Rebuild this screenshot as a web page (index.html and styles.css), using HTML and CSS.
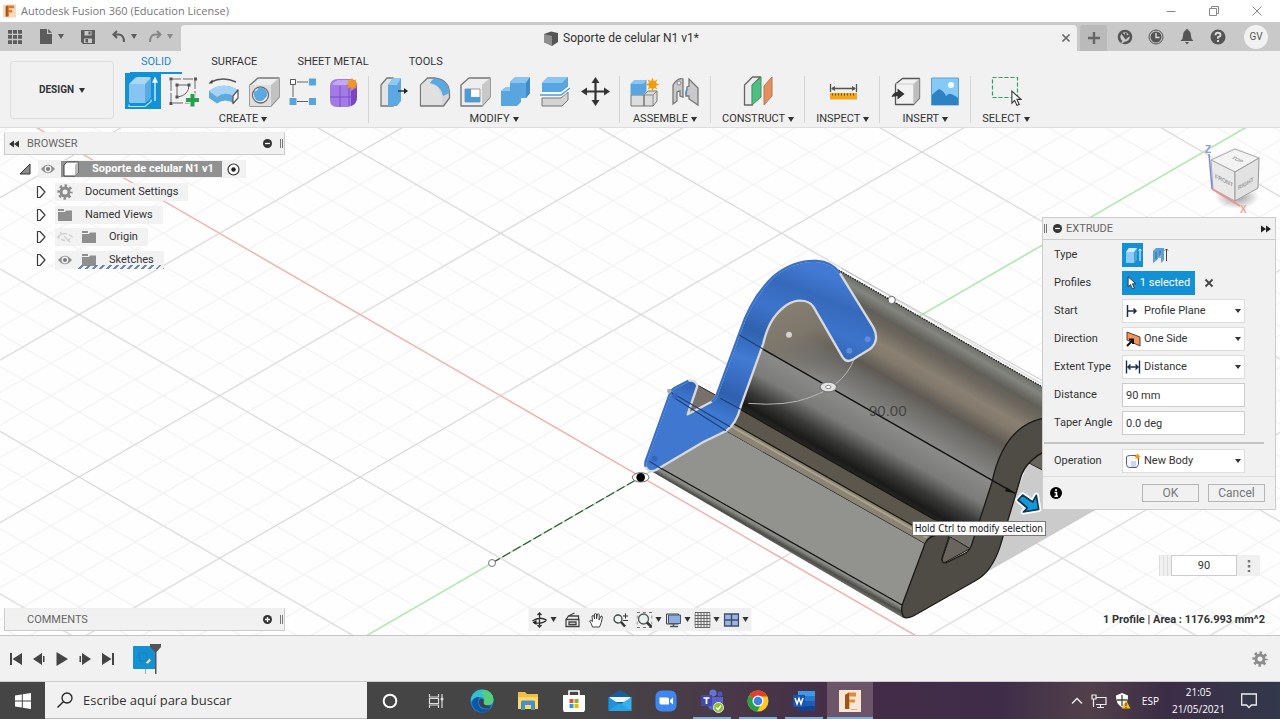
FILE: index.html
```html
<!DOCTYPE html>
<html lang="en">
<head>
<meta charset="utf-8">
<title>Autodesk Fusion 360 (Education License)</title>
<link rel="stylesheet" href="styles.css">
</head>
<body>
<svg class="defs" aria-hidden="true">
  <symbol id="burst" viewBox="-7 -7 14 14"><path d="M0-6.500L1.300-3 4.600-4.600 3-1.300 6.500 0 3 1.300 4.600 4.600 1.300 3 0 6.500-1.300 3-4.600 4.600-3 1.300-6.500 0-3-1.300-4.600-4.600-1.300-3z" fill="#f39a0c"/></symbol>
  <symbol id="eye" viewBox="0 0 16 12"><path d="M1 6Q8-2.500 15 6 8 14.500 1 6z" fill="#8e8e8e"/><circle cx="8" cy="6" r="3.400" fill="#f1f1f1"/><circle cx="8" cy="6" r="2" fill="#7c7c7c"/></symbol>
  <symbol id="folder" viewBox="0 0 16 14"><path d="M1 1h6v2H1zM1 4h7l1-1.500h6V13H1z" fill="#8f8f8f"/></symbol>
  <symbol id="gear" viewBox="0 0 16 16"><circle cx="8" cy="8" r="4" fill="none" stroke="#8c8c8c" stroke-width="3"/><circle cx="8" cy="8" r="6.400" fill="none" stroke="#8c8c8c" stroke-width="2.600" stroke-dasharray="2.500 2.530" stroke-dashoffset="1.250"/></symbol>
  <symbol id="twist" viewBox="0 0 12 14"><path d="M2.500 1.500v11H5L10 7 5 1.500z" fill="#fff" stroke="#3b3b3b" stroke-width="1.200" stroke-linejoin="round"/></symbol>
  <symbol id="cursor" viewBox="0 0 12 18"><path d="M1 1v13l3-3 2.500 5.500 2.500-1L6.500 10H11z" fill="#fff" stroke="#333" stroke-width="1.200"/></symbol>
</svg>

<header class="titlebar">
  <svg class="app-logo" viewBox="0 0 14 14"><path d="M0 0h14v14H0z" fill="#f8d9bd"/><path d="M3 2l2-1h7v3H6.500v2H10v2.500H6.500V13H3z" fill="#dd7a2c"/><path d="M3 2l2-1v12H3z" fill="#9c4f1c"/></svg>
  <span class="title-text">Autodesk Fusion 360 (Education License)</span>
  <div class="window-controls">
    <button aria-label="Minimize"><svg viewBox="0 0 12 12"><path d="M1.500 6.500h9" stroke="#888" fill="none"/></svg></button>
    <button aria-label="Restore"><svg viewBox="0 0 12 12"><path d="M1.500 3.500h7v7h-7zM3.500 3.500v-2h7v7h-2" stroke="#888" fill="none"/></svg></button>
    <button aria-label="Close"><svg viewBox="0 0 12 12"><path d="M1.500 1.500l9 9M10.500 1.500l-9 9" stroke="#888" fill="none"/></svg></button>
  </div>
</header>

<div class="tabbar">
  <div class="quick">
    <button aria-label="Data panel"><svg width="14" height="14" viewBox="0 0 14 14"><path d="M2 0v14M7 0v14M12 0v14" stroke="#5c5c5c" stroke-width="4" stroke-dasharray="3.700 1.400"/></svg></button>
    <button class="with-caret" aria-label="File"><svg width="14" height="15" viewBox="0 0 14 15"><path d="M1 0h7v5h5v10H1zM9.200 0L13 3.800H9.200z" fill="#5c5c5c"/></svg><i class="caret"></i></button>
    <button aria-label="Save"><svg width="14" height="14" viewBox="0 0 14 14"><path d="M0 0h14v14H2l-2-2z" fill="#5c5c5c"/><path d="M3.500 1h7v4.500h-7zM3 8.500h8V13H3z" fill="#c9c9c9"/><path d="M7.500 1.500h2v3h-2zM4.500 9h2.500v3.500H4.500z" fill="#5c5c5c"/></svg></button>
    <button class="with-caret" aria-label="Undo"><svg width="14" height="13" viewBox="0 0 14 13"><path d="M5 1L1.500 4.500 5 8M2 4.500h5q5 .5 5 7.500" fill="none" stroke="#5c5c5c" stroke-width="2"/></svg><i class="caret"></i></button>
    <button class="with-caret faded" aria-label="Redo"><svg width="14" height="13" viewBox="0 0 14 13"><path d="M9 1l3.500 3.500L9 8M12 4.500H7q-5 .5-5 7.500" fill="none" stroke="#5c5c5c" stroke-width="2"/></svg><i class="caret"></i></button>
  </div>
  <div class="doc-tab">
    <span class="doc-name"><svg width="16" height="15" viewBox="0 0 16 15"><path d="M1 3l7-2.500L15 2v9l-6 4-8-4z" fill="#555"/><path d="M1 3l8 2v9.500l-8-3z" fill="#8f8f8f"/></svg>Soporte de celular N1 v1*</span>
    <button class="doc-close" aria-label="Close tab"><svg width="10" height="10" viewBox="0 0 10 10"><path d="M1.500 1.500l7 7M8.500 1.500l-7 7" stroke="#666" stroke-width="1.600"/></svg></button>
  </div>
  <button class="new-tab" aria-label="New design"><svg width="12" height="12" viewBox="0 0 12 12"><path d="M6 0v12M0 6h12" stroke="#666" stroke-width="2.400"/></svg></button>
  <div class="account">
    <button aria-label="Extensions"><svg viewBox="0 0 16 16"><circle cx="8" cy="8" r="6" fill="none" stroke="#555" stroke-width="2.600"/><path d="M8 10l3-3M4 3l4 5 1-4M11 3l2 3-4 2" stroke="#555" stroke-width="2" fill="none"/><path d="M5 14l3-4" stroke="#c9c9c9" stroke-width="2"/></svg></button>
    <button aria-label="Job status"><svg viewBox="0 0 16 16"><circle cx="8" cy="8" r="7" fill="none" stroke="#555"/><circle cx="8" cy="8" r="5.500" fill="#555"/><path d="M8 4v4.500h3.500" stroke="#ddd" stroke-width="1.400" fill="none"/></svg></button>
    <button aria-label="Notifications"><svg viewBox="0 0 16 16"><path d="M8 0q1.500 0 1.500 1.500Q12 2.500 12 7q0 3 2.500 5h-13Q4 10 4 7q0-4.500 2.500-5.500Q6.500 0 8 0zM6 13h4l-2 2.500z" fill="#555"/></svg></button>
    <button aria-label="Help"><svg viewBox="0 0 16 16"><circle cx="8" cy="8" r="7.500" fill="#555"/><path d="M5.500 6.200Q5.500 3.800 8 3.800t2.500 2.200Q10.500 7.500 8 8.200v1.600M8 11v2" stroke="#ddd" stroke-width="1.900" fill="none"/></svg></button>
    <button class="avatar">GV</button>
  </div>
</div>

<div class="ribbon">
  <button class="workspace">DESIGN <i class="caret"></i></button>
  <div class="ribbon-body">
    <nav class="ribbon-tabs">
      <button class="rtab active">SOLID</button>
      <button class="rtab">SURFACE</button>
      <button class="rtab">SHEET METAL</button>
      <button class="rtab">TOOLS</button>
    </nav>
    <div class="groups">
      <section class="group">
        <div class="tools">
          <button class="tool on" aria-label="Extrude"><svg viewBox="0 0 36 36"><path d="M4 31.500v2h16l6-5v-2" fill="none" stroke="#bfe2f7" stroke-width="1.200"/><path d="M4 12q0-2 2-3l4-4q1-1 3-1h11q2 0 2 2v18l-6 6H6q-2 0-2-2z" fill="#a9d7f8"/><path d="M20 11l6-6v19l-6 6z" fill="#5ba8e2"/><path d="M4 11h14q2 0 2 2v17H6q-2 0-2-2z" fill="#86c4f2"/><path d="M30 28V6M28 9l2-4 2 4z" stroke="#e9f6ff" stroke-width="1.300" fill="#fff"/></svg></button>
          <button class="tool" aria-label="Create Sketch"><svg viewBox="0 0 36 36"><path d="M6 6h24v24H6z" fill="none" stroke="#666" stroke-dasharray="10 2"/><path d="M12 12h12q0 10-11 12h-1z" fill="none" stroke="#666"/><path d="M4.500 4.500h3v3h-3zM29 4.500h3v3h-3zM4.500 29h3v3h-3zM10.500 10.500h3v3h-3zM22.500 10.500h3v3h-3zM10.500 22.500h3v3h-3z" fill="#555"/><path d="M27.500 20v14M20.500 27h14" stroke="#f1f1f1" stroke-width="6"/><path d="M27.500 21v12.500M21 27h13" stroke="#25a04c" stroke-width="4"/></svg></button>
          <button class="tool" aria-label="Revolve"><svg viewBox="0 0 36 36"><path d="M6 9q12-6 25 0" fill="none" stroke="#555" stroke-width="1.500"/><path d="M3.500 10.500l4-4v4z" fill="#444"/><path d="M4 18q14-10 29-1l-4 13.500q-9-6-17 0L4 25z" fill="#5fa9df"/><path d="M4 18q14-10 29-1l-5 6q-8-5-16 1z" fill="#a4d3f5"/><path d="M33 17v8l-5 5.500V23z" fill="#fff" stroke="#555" stroke-width="1.200" stroke-linejoin="round"/></svg></button>
          <button class="tool" aria-label="Hole"><svg viewBox="0 0 36 36"><path d="M5 12l8-7h21v19l-8 9H5z" fill="#eee" stroke="#777" stroke-width="1.400" stroke-linejoin="round"/><path d="M26 12l8-7v19l-8 9z" fill="#c2c2c2"/><path d="M5 12h21v21H5z" fill="#dedede"/><circle cx="15.500" cy="22" r="8" fill="#fff" stroke="#666" stroke-width="1.300"/><path d="M9 18q3 1 5-4 9 1 8 9-5 8-11 4-3-4-2-9z" fill="#5aa9e4"/></svg></button>
          <button class="tool" aria-label="Pattern"><svg viewBox="0 0 36 36"><path d="M12 9h11M8 12v12M12 28.500h11" stroke="#666"/><path d="M5.500 6.500h5v5h-5z" fill="#fff" stroke="#555"/><path d="M24 5.500h7v7h-7zM4.500 25h7v7h-7zM24 25h7v7h-7z" fill="#58a5dd"/></svg></button>
          <button class="tool" aria-label="Create Form"><svg viewBox="0 0 36 36"><path d="M5 14q0-8 8-8h12q7 0 7 7v11q0 8-9 10H12q-7 0-7-7z" fill="#a37ae6"/><path d="M26 18q6-3 6-6v12q0 7-6 9z" fill="#7746c0"/><path d="M7 12q3-5 8-5h12l-4 5z" fill="#c4a8f3"/><path d="M15 13v21M5 24h21l6-5M24 13v20" stroke="#7a4cc4" fill="none"/><use href="#burst" x="20" y="4" width="14" height="14"/></svg></button>
        </div>
        <button class="group-name">CREATE <i class="caret"></i></button>
      </section>
      <section class="group">
        <div class="tools">
          <button class="tool" aria-label="Press Pull"><svg viewBox="0 0 36 36"><path d="M5 12l6-7h6v28H5z" fill="#e4e4e4" stroke="#777" stroke-width="1.300"/><path d="M12 12l5-7h8v23l-4 5h-9z" fill="#5ba8e2"/><path d="M12 12l5-7h8l-4 7z" fill="#8fc8f2"/><path d="M22 18h7" stroke="#333" stroke-width="1.500"/><path d="M28 15l4 3-4 3z" fill="#222"/></svg></button>
          <button class="tool" aria-label="Fillet"><svg viewBox="0 0 36 36"><path d="M4.500 12l7-7h7q15 2 15 16v4l-6 8h-23z" fill="#d6d6d6" stroke="#777" stroke-width="1.300" stroke-linejoin="round"/><path d="M5 12l7-6h5l-4 5q11 1 13 15v6H5z" fill="#e0e0e0"/><path d="M14 10l4-5q15 2 15.500 15L27 23Q25 12 14 10z" fill="#5ba8e2"/></svg></button>
          <button class="tool" aria-label="Shell"><svg viewBox="0 0 36 36"><path d="M5 12l8-7h21v19l-8 9H5z" fill="#eee" stroke="#777" stroke-width="1.400" stroke-linejoin="round"/><path d="M26 12l8-7v19l-8 9z" fill="#c8c8c8"/><path d="M9 16h15v13H9z" fill="#fff" stroke="#999"/><path d="M9 16h6v8l-6 5zM9 29l6-5h9v5z" fill="#4d9bd8"/></svg></button>
          <button class="tool" aria-label="Combine"><svg viewBox="0 0 36 36"><path d="M5 18l5-4h4V9l5-5h15v16l-4 5h-5v4l-4 4H5z" fill="#58a5df"/><path d="M5 18l5-4h4v4zM14 10l5-6h15l-4 6z" fill="#8bc5f1"/><path d="M30 10l4-6v16l-4 5z" fill="#3f8ccb"/></svg></button>
          <button class="tool" aria-label="Split Body"><svg viewBox="0 0 36 36"><path d="M6 10l6-6h20v10l-6 5H6z" fill="#58a5df"/><path d="M6 10l6-6h20l-6 6z" fill="#8bc5f1"/><path d="M6 25h19l7-6v8l-6 6H6z" fill="#d4d4d4" stroke="#777"/><path d="M4 21.500h21l9-7" fill="none" stroke="#fff" stroke-width="4"/><path d="M4 22h21l9-7" fill="none" stroke="#4b9bd7" stroke-width="1.300"/></svg></button>
          <button class="tool" aria-label="Move"><svg viewBox="0 0 36 36"><path d="M19.500 8v21M9 18.500h21" stroke="#333" stroke-width="2.200"/><path d="M19.500 4l4 6h-8zM19.500 33l4-6h-8zM5 18.500l6-4v8zM34 18.500l-6-4v8z" fill="#333"/></svg></button>
        </div>
        <button class="group-name">MODIFY <i class="caret"></i></button>
      </section>
      <section class="group">
        <div class="tools">
          <button class="tool" aria-label="New Component"><svg viewBox="0 0 36 36"><path d="M4 22h13v11H4zM17 22l4-4h9v10l-4 5h-9z" fill="#ddd" stroke="#777"/><path d="M17 22h9l4-4M26 22v11" fill="none" stroke="#888"/><path d="M3.500 11l4-4h12v11l-3 4h-13z" fill="#58a5df"/><path d="M3.500 11l4-4h12l-3 4z" fill="#8bc5f1"/><use href="#burst" x="18" y="4" width="15" height="15"/></svg></button>
          <button class="tool" aria-label="Joint"><svg viewBox="0 0 36 36"><path d="M6 12q5-8 10-6v18l-3-1v-5l-3 1v9l-4 3zM20 14l2-1V6l9 9v17l-9-6v-3h-3z" fill="#c9c9c9" stroke="#777" stroke-width="1.300"/><circle cx="12" cy="10" r="2" fill="#eee" stroke="#888"/><path d="M21 16q-3 2-2 6" stroke="#4b9bd7" stroke-width="1.500" fill="none"/></svg></button>
        </div>
        <button class="group-name">ASSEMBLE <i class="caret"></i></button>
      </section>
      <section class="group wide">
        <div class="tools">
          <button class="tool" aria-label="Offset Plane"><svg viewBox="0 0 36 36"><path d="M4.500 12l8-8h8l-8 8v20h-8z" fill="#ececec" stroke="#666" stroke-width="1.300" stroke-linejoin="round"/><path d="M12 12l9-8v20l-9 8z" fill="#4cc080" stroke="#4d8a66"/><path d="M24 13l8-9v19l-8 9z" fill="#e58e5f" stroke="#b9764f"/></svg></button>
        </div>
        <button class="group-name">CONSTRUCT <i class="caret"></i></button>
      </section>
      <section class="group wide">
        <div class="tools">
          <button class="tool" aria-label="Measure"><svg viewBox="0 0 36 36"><path d="M5.500 11v8M31.500 11v8M7 15.500h23" stroke="#555" stroke-width="1.300"/><path d="M6 15.500l4-2.500v5zM31 15.500L27 13v5z" fill="#555"/><path d="M5 20h27v6.500H5z" fill="#f2a71b"/><path d="M7 21.500h24" stroke="#6b4a0c" stroke-width="2" stroke-dasharray="1 2"/></svg></button>
        </div>
        <button class="group-name">INSPECT <i class="caret"></i></button>
      </section>
      <section class="group">
        <div class="tools">
          <button class="tool" aria-label="Insert Derive"><svg viewBox="0 0 36 36"><path d="M8.500 11l7-5.500h17V25l-6 6.500h-18z" fill="#f2f2f2" stroke="#555" stroke-width="1.300" stroke-linejoin="round"/><path d="M26.500 11l6-5.500V25l-6 6.500z" fill="#bdbdbd"/><path d="M8.500 11h18v20" fill="none" stroke="#ccc"/><path d="M4.500 24q2-5 6-5v-3.500l7 5.500-7 5.500v-3.500z" fill="#333"/></svg></button>
          <button class="tool" aria-label="Canvas"><svg viewBox="0 0 36 36"><path d="M4.500 5h27v27h-27z" fill="#85caf6" stroke="#5f9fd0"/><circle cx="24" cy="12" r="3" fill="#fff"/><path d="M5 22q4-4 7-6 5 2 7 7 3-3 5-2 5 2 7 4v7H5z" fill="#2d82c4"/></svg></button>
        </div>
        <button class="group-name">INSERT <i class="caret"></i></button>
      </section>
      <section class="group wide last">
        <div class="tools">
          <button class="tool" aria-label="Select"><svg viewBox="0 0 36 36"><path d="M4.500 4.500h25v20h-25z" fill="none" stroke="#2fa060" stroke-width="1.200" stroke-dasharray="4 2"/><use href="#cursor" x="23" y="17" width="11" height="17"/></svg></button>
        </div>
        <button class="group-name">SELECT <i class="caret"></i></button>
      </section>
    </div>
  </div>
</div>

<main class="canvas">
  <svg class="scene" viewBox="0 128 1280 507" preserveAspectRatio="xMidYMid slice">
    <defs>
      <pattern id="minor" patternUnits="userSpaceOnUse" x="641" y="477" width="56.200" height="32.500"><path d="M-1-.6L57.200 33.100M-1 33.100L57.200-.6" stroke="#efefef" fill="none"/></pattern>
      <pattern id="major" patternUnits="userSpaceOnUse" x="641" y="477" width="281" height="162.500"><path d="M-2-1.200L283 163.700M-2 163.700L283-1.200" stroke="#d4d4d4" fill="none"/></pattern>
      <linearGradient id="surf" gradientUnits="userSpaceOnUse" x1="655" y1="90" x2="398" y2="537">
        <stop offset="0" stop-color="#6e6f6a"/><stop offset=".04" stop-color="#83857f"/><stop offset=".11" stop-color="#605f58"/><stop offset=".17" stop-color="#6f695f"/><stop offset=".25" stop-color="#8a8073"/><stop offset=".31" stop-color="#82786b"/><stop offset=".4" stop-color="#5e5a53"/><stop offset=".47" stop-color="#6d6c69"/><stop offset=".63" stop-color="#8a8a88"/><stop offset=".76" stop-color="#7b7b7a"/><stop offset=".87" stop-color="#393938"/><stop offset=".95" stop-color="#1a1a19"/><stop offset="1" stop-color="#2c2b28"/>
      </linearGradient>
      <linearGradient id="tan" x1="0" y1="0" x2=".6" y2="1"><stop offset="0" stop-color="#8c8274"/><stop offset=".5" stop-color="#7d766b"/><stop offset="1" stop-color="#6a6761" stop-opacity="0"/></linearGradient>
      <linearGradient id="blue" gradientUnits="userSpaceOnUse" x1="500" y1="60" x2="250" y2="680"><stop offset="0" stop-color="#4279d2"/><stop offset=".1" stop-color="#3569bb"/><stop offset=".22" stop-color="#3d74cb"/><stop offset=".35" stop-color="#2f62ae"/><stop offset=".48" stop-color="#427bd4"/><stop offset=".66" stop-color="#2f60b0"/><stop offset=".76" stop-color="#3f78d0"/><stop offset="1" stop-color="#4078d0"/></linearGradient>
      <linearGradient id="rim" gradientUnits="userSpaceOnUse" x1="480" y1="895" x2="467" y2="918"><stop offset="0" stop-color="#8a8b86"/><stop offset=".5" stop-color="#4c4c48"/><stop offset="1" stop-color="#73746e"/></linearGradient>
    </defs>
    <path d="M0 0h1280v760H0z" fill="#fefefe"/>
    <path d="M0 0h1280v760H0z" fill="url(#minor)"/>
    <path d="M0 0h1280v760H0z" fill="url(#major)"/>
    <path d="M0 106.500L1280 846" stroke="#f3b0ae" stroke-width="1.200"/>
    <path d="M200 732L492 563M641 477L1280 108" stroke="#a9eea6" stroke-width="1.200"/>
    <path d="M492 563L641 477" stroke="#a9dca6"/><path d="M492 563L641 477" stroke="#2b5a34" stroke-width="1.300" stroke-dasharray="9 3"/>
    <circle cx="492" cy="563" r="3.500" fill="#fff" stroke="#777"/>
    <g transform="translate(620 240) scale(.33333)">
      <path d="M1225 665L1300 690 1430 808 1085 1005 1185 770z" fill="#cbcbcb"/>
      <path d="M665 85L1300 440" stroke="#aaa" stroke-width="2"/>
      <path d="M655 90L1300 460V545L1200 600 1140 720 1085 850 1050 930 940 840 350 510 440 270Q470 190 540 180z" fill="url(#surf)"/>
      <path d="M655 90L1300 460" stroke="#222" stroke-width="4" stroke-dasharray="5 3"/>
      <path d="M440 270Q465 185 540 180 570 180 580 200L675 362 700 420 560 400 425 330z" fill="url(#tan)"/>
      <path d="M232 435L290 467 284 482 205 520z" fill="#77716a" stroke="#222" stroke-width="3"/>
      <path d="M360 508L945 840 985 880 925 895 335 553z" fill="#5c574c"/>
      <path d="M338 550L930 886 915 912 318 572z" fill="#8b8474"/>
      <path d="M335 560L922 893" stroke="#aba28e" stroke-width="6"/>
      <path d="M360 508L945 840M338 550L930 886M318 574L915 912" stroke="#15140f" stroke-width="3.500" fill="none"/>
      <path d="M250 605L318 574 915 912 850 1130 100 694z" fill="#92938e"/>
      <path d="M110 680L850 1097V1134L98 696z" fill="url(#rim)"/>
      <path d="M115 680L850 1097" stroke="#111" stroke-width="3.500"/>
      <path d="M1225 668L1268 632 1320 660V718z" fill="#69645b" stroke="#222" stroke-width="3"/>
      <path d="M990 888L1000 860H1085L1050 930z" fill="#77756f"/>
      <path d="M850 1130Q840 1110 850 1085L910 925Q918 890 950 885L995 865 965 958Q968 975 985 965L1040 937Q1052 928 1058 905L1115 730Q1150 560 1268 535L1320 515V615Q1215 650 1200 720L1140 920Q1115 995 1070 1020L880 1128Q858 1138 850 1130z" fill="#4f4c46" stroke="#1b1a17" stroke-width="4"/>
      <path d="M990 890L1050 926 975 967Q964 968 968 953z" fill="#69655d" stroke="#1b1a17" stroke-width="3"/>
      <path d="M430 328L1185 760" stroke="#111" stroke-width="4"/><path d="M1160 742l25 18-30-6z" fill="#111"/>
      <path d="M385 490Q500 500 570 472 690 430 710 330" fill="none" stroke="#b5b5b2" stroke-width="3"/>
      <path d="M77 680Q74 668 80 655L150 460Q152 450 165 443L205 422Q228 420 232 438L203 523 275 485Q287 478 290 465L360 275Q395 170 460 110 520 60 590 63 635 65 660 100L760 262Q775 290 763 312 757 322 750 327L700 358Q680 370 668 352L580 200Q568 182 540 182 500 182 460 235 440 265 430 310L362 500Q350 550 318 573L250 606 108 690Q85 700 77 680z" fill="url(#blue)" stroke="#d6d9de" stroke-width="7" stroke-linejoin="round"/>
      <path d="M275 485Q287 478 290 465L360 275Q395 170 460 110 520 60 590 63 635 65 660 100M77 680Q74 668 80 655L150 460Q152 450 165 443L205 422" fill="none" stroke="#3a70c6" stroke-width="7"/>
      <path d="M150 455L330 560M165 475L318 572M358 285L430 328M88 664L130 690M300 475L362 508" stroke="#1d4076" stroke-width="3.500"/>
      <g fill="#3566c0"><circle cx="207" cy="443" r="9"/><circle cx="165" cy="467" r="9"/><circle cx="104" cy="656" r="9"/></g>
      <g fill="#5a8ce0"><circle cx="688" cy="332" r="9"/><circle cx="743" cy="298" r="9"/></g>
      <circle cx="507" cy="284" r="9" fill="#d5d2cd"/><circle cx="148" cy="453" r="7" fill="#aaa"/>
      <circle cx="815" cy="180" r="11" fill="#fff" stroke="#666" stroke-width="3"/>
      <ellipse cx="625" cy="441" rx="25" ry="15" fill="#e2e2e2" stroke="#777" stroke-width="4"/><ellipse cx="625" cy="441" rx="8" ry="5" fill="#fff" stroke="#888" stroke-width="3"/>
      <ellipse cx="62" cy="712" rx="25" ry="14" fill="#fff" stroke="#666" stroke-width="3"/><circle cx="62" cy="712" r="13" fill="#050505"/>
      <path d="M1208 765L1238 786 1249 766 1256 808 1210 816 1222 804 1194 780z" fill="#1596d6" stroke="#fff" stroke-width="16" stroke-linejoin="round"/>
      <path d="M1208 765L1238 786 1249 766 1256 808 1210 816 1222 804 1194 780z" fill="#1597d9" stroke="#0c3550" stroke-width="5" stroke-linejoin="round"/>
    </g>
    <text class="dim" x="869" y="416">90.00</text>
  </svg>

  <section class="browser">
    <div class="bar">
      <svg width="10" height="8" viewBox="0 0 10 8"><path d="M5 .5v7L0 4zM10 .5v7L5 4z" fill="#333"/></svg>
      <h2>BROWSER</h2>
      <svg width="9" height="9" viewBox="0 0 9 9"><circle cx="4.500" cy="4.500" r="4.500" fill="#333"/><path d="M2 4.500h5" stroke="#fff" stroke-width="1.300"/></svg>
      <i class="grip"></i>
    </div>
    <ul class="tree">
      <li class="root"><svg width="12" height="12" viewBox="0 0 12 12"><path d="M11 1v10H1z" fill="#8b8b8b" stroke="#333"/></svg>
        <span class="item"><svg width="16" height="12"><use href="#eye"/></svg><span class="root-name"><svg width="16" height="16" viewBox="0 0 16 16"><path d="M1 4l3-3h11v11l-3 3H1z" fill="#fff" stroke="#444"/><path d="M12 4l3-3v11l-3 3z" fill="#bbb"/></svg><b>Soporte de celular N1 v1</b></span><svg width="13" height="13" viewBox="0 0 13 13"><circle cx="6.500" cy="6.500" r="5.500" fill="#fff" stroke="#333" stroke-width="1.200"/><circle cx="6.500" cy="6.500" r="2.200" fill="#222"/></svg></span></li>
      <li><svg width="12" height="14"><use href="#twist"/></svg><span class="item"><svg width="16" height="16"><use href="#gear"/></svg><span>Document Settings</span></span></li>
      <li><svg width="12" height="14"><use href="#twist"/></svg><span class="item"><svg width="16" height="14"><use href="#folder"/></svg><span>Named Views</span></span></li>
      <li><svg width="12" height="14"><use href="#twist"/></svg><span class="item sub"><svg class="hidden-eye" width="16" height="12" viewBox="0 0 16 12"><path d="M1 6Q8-1 15 6 8 13 1 6zM3 1l10 10" fill="none" stroke="#aaa" stroke-width="1.300" stroke-dasharray="4 2"/></svg><svg width="16" height="14"><use href="#folder"/></svg><span>Origin</span></span></li>
      <li><svg width="12" height="14"><use href="#twist"/></svg><span class="item sub"><svg width="16" height="12"><use href="#eye"/></svg><svg width="16" height="14"><use href="#folder"/></svg><span>Sketches</span><i class="hatch"></i></span></li>
    </ul>
  </section>

  <section class="comments bar">
    <h2>COMMENTS</h2>
    <svg width="9" height="9" viewBox="0 0 9 9"><circle cx="4.500" cy="4.500" r="4.500" fill="#333"/><path d="M2 4.500h5M4.500 2v5" stroke="#fff" stroke-width="1.300"/></svg>
    <i class="grip"></i>
  </section>

  <svg class="viewcube" viewBox="0 0 48 76" aria-label="View cube">
    <defs><radialGradient id="sh"><stop offset="0" stop-color="#999"/><stop offset="1" stop-color="#999" stop-opacity="0"/></radialGradient></defs>
    <ellipse cx="32" cy="54" rx="22" ry="12" fill="url(#sh)"/>
    <path d="M6 15l24-11 25 11-1 31-24 12L7 46z" fill="#f1f1f1"/>
    <path d="M6 17L30 6l24 9-24 14z" fill="#f3f3f3" stroke="#aaa"/><path d="M6 17l24 12v29L8 46z" fill="#e9e9e9" stroke="#aaa"/><path d="M30 29l24-14-1 30-23 13z" fill="#e2e2e2" stroke="#999"/>
    <text transform="matrix(.87 .44 0 1 10 35)">FRONT</text><text transform="matrix(.84 -.48 0 1 33 47)">RIGHT</text><text transform="matrix(.8 .4 -.8 .45 26 15)">TOP</text>
    <path d="M4 11L7 46" stroke="#8086e0" stroke-width="1.500"/><path d="M7 46l28 17" stroke="#ef8f8f" stroke-width="1.500"/>
    <text class="axis z" x="0" y="10">Z</text><text class="axis x" x="35" y="70">X</text>
  </svg>

  <form class="extrude">
    <div class="bar"><i class="grip"></i><svg width="9" height="9" viewBox="0 0 9 9"><circle cx="4.500" cy="4.500" r="4.500" fill="#333"/><path d="M2 4.500h5" stroke="#fff" stroke-width="1.300"/></svg><h2>EXTRUDE</h2><svg width="10" height="8" viewBox="0 0 10 8"><path d="M0 .5v7L5 4zM5 .5v7L10 4z" fill="#222"/></svg></div>
    <div class="fields">
      <span class="lbl">Type</span>
      <div class="types"><button type="button" class="type on" aria-label="Extrude"><svg viewBox="0 0 20 22"><path d="M3 8l3-4h8v11l-3 4H3z" fill="#8ecbf6"/><path d="M11 8l3-4v11l-3 4z" fill="#4f9edb"/><path d="M3 8l3-4h8l-3 4z" fill="#d0eafc"/><path d="M17 5v12M15.500 6.500L17 5l1.500 1.500" stroke="#fff" fill="none"/></svg></button><button type="button" class="type" aria-label="Thin Extrude"><svg viewBox="0 0 20 22"><path d="M3 7l3-3h8v12l-3 3v-9l-4 6-4 3z" fill="#5ba1d8"/><path d="M6 8v7M10 6v8" stroke="#2e6ea5"/><path d="M16.500 5v12M15 6.500L16.500 5 18 6.500" stroke="#444" fill="none"/></svg></button></div>
      <span class="lbl">Profiles</span>
      <div class="types"><button type="button" class="selected"><svg width="10" height="14"><use href="#cursor"/></svg>1 selected</button><button type="button" class="clear" aria-label="Clear profiles"><svg width="10" height="10" viewBox="0 0 10 10"><path d="M1.500 1.500l7 7M8.500 1.500l-7 7" stroke="#444" stroke-width="1.800"/></svg></button></div>
      <label for="start">Start</label>
      <div class="pick"><svg viewBox="0 0 16 16"><path d="M2.500 2v12M3 8h8M8.500 5.500L11 8l-2.500 2.500" fill="none" stroke="#1d2c4a" stroke-width="1.500"/></svg><select id="start"><option>Profile Plane</option></select><i class="caret"></i></div>
      <label for="dir">Direction</label>
      <div class="pick"><svg viewBox="0 0 16 16"><path d="M2 1l13 5v9L2 9z" fill="#ef9560" stroke="#5c3a26"/><path d="M2 15l6-6M8 13V8.500H4" stroke="#111" stroke-width="2" fill="none"/></svg><select id="dir"><option>One Side</option></select><i class="caret"></i></div>
      <label for="ext">Extent Type</label>
      <div class="pick"><svg viewBox="0 0 16 16"><path d="M1.500 1.500v13M14.500 1.500v13M3 8h10M5.500 5.500L3 8l2.500 2.500M10.500 5.500L13 8l-2.500 2.500" fill="none" stroke="#1d2c4a" stroke-width="1.400"/></svg><select id="ext"><option>Distance</option></select><i class="caret"></i></div>
      <label for="dist">Distance</label><input id="dist" value="90 mm">
      <label for="taper">Taper Angle</label><input id="taper" value="0.0 deg">
    </div>
    <hr>
    <div class="fields op">
      <label for="oper">Operation</label>
      <div class="pick"><svg viewBox="0 0 16 16"><path d="M1.500 4q0-1.500 4-1.500h8v9l-2 3H5q-3.500 0-3.500-3z" fill="#f5f7fb" stroke="#4d5f80"/><path d="M6 8h5v6H6z" fill="#cfd8ea"/><use href="#burst" x="9" y="0" width="7" height="7"/></svg><select id="oper"><option>New Body</option></select><i class="caret"></i></div>
    </div>
    <div class="actions"><svg width="12" height="12" viewBox="0 0 12 12"><circle cx="6" cy="6" r="6" fill="#000"/><path d="M6 2v2M4.500 5.500H6.500V9M4.500 9.200h3.500" stroke="#fff" stroke-width="1.600" fill="none"/></svg><button type="button">OK</button><button type="button">Cancel</button></div>
  </form>

  <div class="hint" role="tooltip">Hold Ctrl to modify selection</div>

  <div class="value-box"><i class="handle"></i><input value="90" aria-label="Distance value"><button aria-label="More"><svg width="4" height="14" viewBox="0 0 4 14"><path d="M2 1v12" stroke="#777" stroke-width="2.500" stroke-dasharray="2.500 2.500"/></svg></button></div>

  <div class="navbar">
    <button aria-label="Orbit"><svg viewBox="0 0 16 16"><path d="M8 1v14M1 9q7-5 14-1M15 8q-3 4-12 3M6 3l2-2 2 2M6 13l2 2 2-2" fill="none" stroke="#333" stroke-width="1.300"/><path d="M5 8v5L1 10.500z" fill="#222"/></svg><i class="caret"></i></button>
    <button aria-label="Look At"><svg viewBox="0 0 16 16"><path d="M1.500 7.500h13v7h-13zM4.500 10h7v2.500h-7zM2 7l2-3h10v3M4 4l6-3" fill="none" stroke="#444" stroke-width="1.300"/></svg></button>
    <button aria-label="Pan"><svg viewBox="0 0 16 16"><path d="M4 15q-1-4-3-6 1-1.500 3 .5L3.500 4q1.500-1 2 0L6 7V2q1.200-1 2 0v5l1-5q1.500-.5 1.800.5L10.500 8l2-4q1.300 0 1.500 1-1 6-3 10z" fill="#fff" stroke="#444"/></svg></button>
    <button aria-label="Zoom"><svg viewBox="0 0 16 16"><circle cx="5.500" cy="7" r="4" fill="#eef5f5" stroke="#444" stroke-width="1.300"/><path d="M8.500 10l4 4.500" stroke="#333" stroke-width="2.500"/><path d="M13 1.500v5M10.500 4h5M10.500 8.500h5" stroke="#333"/></svg></button>
    <button aria-label="Fit"><svg viewBox="0 0 16 16"><path d="M.5.500h15v15H.5z" fill="none" stroke="#777" stroke-dasharray="3 3"/><circle cx="7" cy="7" r="5" fill="#e7f1ef" stroke="#555" stroke-width="1.300"/><path d="M10.500 10.500l4.500 4.500" stroke="#333" stroke-width="2.500"/></svg><i class="caret"></i></button>
    <button aria-label="Display Settings"><svg viewBox="0 0 16 16"><path d="M1 2h12v10H1z" fill="#dfe6f2" stroke="#444"/><path d="M3 3h12v8.500H3z" fill="#8faedb" stroke="#44557a"/><path d="M8 12v2M4.500 14.500h8" stroke="#555" stroke-width="1.500"/></svg><i class="caret"></i></button>
    <button aria-label="Grid"><svg viewBox="0 0 16 16"><path d="M.5.500h15v15H.5zM3.500 0v16M6.500 0v16M9.500 0v16M12.500 0v16M0 3.500h16M0 6.500h16M0 9.500h16M0 12.500h16" fill="none" stroke="#666"/></svg><i class="caret"></i></button>
    <button aria-label="Viewports"><svg viewBox="0 0 16 16"><path d="M1 2h14v12H1z" fill="#9db6df" stroke="#3d4c6d" stroke-width="1.300"/><path d="M8 2v12M1 8h14" stroke="#3d4c6d" stroke-width="1.500"/></svg><i class="caret"></i></button>
  </div>

  <p class="status">1 Profile | Area : 1176.993 mm^2</p>
</main>

<div class="timeline">
  <div class="play">
    <button aria-label="Go to start"><svg viewBox="0 0 14 14"><path d="M1 1h2v12H1zM13 1v12L3.500 7z" fill="#444"/></svg></button>
    <button aria-label="Step back"><svg viewBox="0 0 14 14"><path d="M10 1v12L1 7zM11 4h1.500v6H11z" fill="#444"/></svg></button>
    <button aria-label="Play"><svg viewBox="0 0 14 14"><path d="M1.500 0v14L13 7z" fill="#444"/></svg></button>
    <button aria-label="Step forward"><svg viewBox="0 0 14 14"><path d="M4 1v12l9-6zM1.500 4H3v6H1.500z" fill="#444"/></svg></button>
    <button aria-label="Go to end"><svg viewBox="0 0 14 14"><path d="M11 1h2v12h-2zM1 1v12l9.500-6z" fill="#444"/></svg></button>
  </div>
  <button class="feature" aria-label="Sketch1"><svg width="29" height="30" viewBox="0 0 29 30"><rect y="2" width="23" height="23" rx="1" fill="#1391d5"/><path d="M6 9h8v8H7z" fill="none" stroke="#2a7bb0"/><path d="M12.500 19l4-4.500 1.500 2-3 3z" fill="#f4dc9a"/><path d="M12.500 25v5" stroke="#aaa"/><path d="M17 0h11v3l-4.500 5V30h-1.500V8L17 3z" fill="#555"/></svg></button>
  <button class="prefs" aria-label="Timeline settings"><svg width="16" height="16"><use href="#gear"/></svg></button>
</div>

<footer class="taskbar">
  <button class="start" aria-label="Start"><svg width="16" height="16" viewBox="0 0 16 16"><path d="M0 2.500L6.800 1.500V7.600H0zM7.800 1.300L16 0V7.600H7.800zM0 8.500H6.800V14.500L0 13.500zM7.800 8.500H16V16L7.800 14.700z" fill="#fff"/></svg></button>
  <label class="search"><svg width="16" height="16" viewBox="0 0 16 16"><circle cx="10" cy="6" r="5" fill="none" stroke="#222" stroke-width="1.300"/><path d="M6.300 9.700L.5 15.500" stroke="#222" stroke-width="1.400"/></svg><input aria-label="Buscar" placeholder="Escribe aquí para buscar"></label>
  <div class="apps">
    <button aria-label="Cortana"><svg viewBox="0 0 24 24"><circle cx="12" cy="12" r="6.300" fill="none" stroke="#fff" stroke-width="2"/></svg></button>
    <button aria-label="Task view"><svg viewBox="0 0 24 24"><path d="M5.500 5v3h9V5M5.500 9.500h9v5h-9zM5.500 19v-3h9v3M18 5v14" fill="none" stroke="#ddd" stroke-width="1.200"/><circle cx="18" cy="10" r="1.500" fill="#ddd"/></svg></button>
    <button aria-label="Edge"><svg viewBox="0 0 24 24"><circle cx="12" cy="12" r="11.500" fill="#1b7fd4"/><path d="M1 9Q4 .5 12 .5 23 1 23.500 11 23 17 16 16q-3-.5-2-3 1-5-5-5-5 0-8 5z" fill="#35c1c9"/><path d="M14 .7Q23 2 23.500 11 23 17 16 16q-3-.5-2-3 3-6-3-9z" fill="#55cf7a"/><path d="M8 13q0 9 12 7-4 4-10 3-8-3-8-10 2-5 7-5-1 2-1 5z" fill="#0f55a5"/><path d="M14 11q-3 6 7 5.500l-1.500 3Q8 20 9 12q1-4 5-1z" fill="#39424d"/></svg></button>
    <button aria-label="File Explorer"><svg viewBox="0 0 24 24"><path d="M2 3h7l2 2h11v15H2z" fill="#f4bd42"/><path d="M2 8h20v12H2z" fill="#ffd968"/><path d="M5 21v-8q0-1.500 1.500-1.500h11Q19 11.500 19 13v8h-4v-5H9v5z" fill="#4590c8"/></svg></button>
    <button aria-label="Microsoft Store"><svg viewBox="0 0 24 24"><path d="M7 7V2h10v5" fill="none" stroke="#fff" stroke-width="1.600"/><path d="M1 6h22v15l-1 2H2l-1-2z" fill="#fff"/><path d="M7.500 10h4v4h-4z" fill="#e8502e"/><path d="M12.500 10h4v4h-4z" fill="#7db72f"/><path d="M7.500 15h4v4h-4z" fill="#2c9fe0"/><path d="M12.500 15h4v4h-4z" fill="#f4b400"/></svg></button>
    <button aria-label="Mail"><svg viewBox="0 0 24 24"><path d="M.5 8L12 1l11.500 7v14H.5z" fill="#135f9f"/><path d="M1.500 8h21v5H1.500z" fill="#eef5fb"/><path d="M.5 8L12 15.500.5 22z" fill="#1d93dd"/><path d="M23.500 8L12 15.500 23.500 22z" fill="#35b0ee"/><path d="M.5 22L12 14l11.500 8z" fill="#2aa3e6"/></svg></button>
    <button aria-label="Zoom"><svg viewBox="0 0 24 24"><rect x="1.500" y="1.500" width="21" height="21" rx="6" fill="#3f86ee"/><path d="M5.500 8.500h8q1.500 0 1.500 1.500v5.500H7Q5.500 15.500 5.500 14zM16 11l3-2.500v7L16 13z" fill="#fff"/></svg></button>
    <button class="open" aria-label="Teams"><svg viewBox="0 0 24 24"><circle cx="13" cy="4" r="3.500" fill="#6a72d8"/><circle cx="20" cy="5" r="2.500" fill="#4f56bb"/><path d="M9 8h14v8q-2 4-5 3-2 3-6 2-4-1-4-5z" fill="#5a61c8"/><path d="M1 6h11v11H1z" fill="#424aa9"/><path d="M3.500 9h6M6.500 9v6" stroke="#fff" stroke-width="1.700"/><circle cx="18.500" cy="18.500" r="5" fill="#8abf2e" stroke="#e8f0dc"/><path d="M16 18.500l2 2 3-4" stroke="#fff" stroke-width="1.500" fill="none"/></svg></button>
    <button class="open" aria-label="Chrome"><svg viewBox="0 0 24 24"><circle cx="12" cy="12" r="10.500" fill="#f9c925"/><path d="M12 12L2.900 6.800A10.500 10.500 0 0 1 21.600 7.600H12z" fill="#e2402f"/><path d="M12 12L2.900 6.800A10.500 10.500 0 0 0 11 22.400l4.500-8z" fill="#27a048"/><circle cx="12" cy="12" r="5.500" fill="#fff"/><circle cx="12" cy="12" r="4.300" fill="#3f80e4"/></svg></button>
    <button class="open" aria-label="Word"><svg viewBox="0 0 24 24"><path d="M6 2h17v5H6z" fill="#3f9ae6"/><path d="M6 7h17v5H6z" fill="#2b78d0"/><path d="M6 12h17v5H6z" fill="#1d5cb4"/><path d="M6 17h17v5H6z" fill="#15438f"/><path d="M1 6h12v12H1z" fill="#1b54ab"/><path d="M3 9l2 6 2-5.500L9 15l2-6" fill="none" stroke="#fff" stroke-width="1.500"/></svg></button>
    <button class="open current" aria-label="Fusion 360"><svg viewBox="0 0 24 24"><path d="M1 1h22v22H1z" fill="#fbe6d3"/><path d="M7 6l4-2.500h7v4h-6.500v3H17v3h-5.500V20H7z" fill="#e08a3a"/><path d="M7 6l4-2.500V20H7z" fill="#9a5420"/><path d="M13 20.500h6" stroke="#cdb49c"/></svg></button>
  </div>
  <div class="tray">
    <button aria-label="Show hidden icons"><svg width="12" height="8" viewBox="0 0 12 8"><path d="M1 6.500l5-5 5 5" fill="none" stroke="#eee" stroke-width="1.300"/></svg></button>
    <button aria-label="Network"><svg width="16" height="14" viewBox="0 0 16 14"><path d="M4.500 3.500h10.500v7H5M9.500 10.500v3M6 13.500h7M1 1h4v4H1zM2.500 5v8" fill="none" stroke="#eee" stroke-width="1.200"/></svg></button>
    <button aria-label="Security"><svg width="16" height="16" viewBox="0 0 16 16"><path d="M7 0l6 2.500q.5 8-6 12-6.500-4-6-12z" fill="#fff"/><path d="M7 2v11M1.500 7h11" stroke="#444" stroke-width="1.300"/><path d="M11 7l4.500 8.500h-9z" fill="#f5bd1e"/><path d="M11 10v3M11 14v1" stroke="#333"/></svg></button>
    <span class="lang">ESP</span>
    <time class="clock"><span>21:05</span><span>21/05/2021</span></time>
    <button aria-label="Action center"><svg width="16" height="16" viewBox="0 0 16 16"><path d="M.7 1h14.600v11H10.500L8 14.500 5.500 12H.7z" fill="none" stroke="#eee" stroke-width="1.300"/></svg></button>
  </div>
</footer>
</body>
</html>
```
FILE: styles.css
```css
* { box-sizing: border-box; }
body {
  margin: 0;
  min-height: 100vh;
  display: flex;
  flex-direction: column;
  background: #f1f1f1;
  color: #333;
  font: 11px/14px Roboto, "Liberation Sans", sans-serif;
}
button { border: 0; padding: 0; margin: 0; background: none; font: inherit; color: inherit; display: inline-flex; align-items: center; justify-content: center; }
input, select { font: inherit; color: inherit; }
svg { display: block; flex: none; }
h2, p, ul { margin: 0; padding: 0; font-size: 11px; font-weight: 400; list-style: none; }
.defs { position: absolute; width: 0; height: 0; }
.caret { display: inline-block; flex: none; border: 3px solid transparent; border-top: 5px solid #333; border-bottom: 0; }

/* Title bar */
.titlebar { display: flex; align-items: center; height: 22px; padding-left: 3px; background: #fff; }
.app-logo { width: 13px; height: 14px; }
.title-text { margin-left: 5px; font: 11px/16px "Open Sans", "Noto Sans", sans-serif; color: #777; }
.window-controls { display: flex; margin-left: auto; padding-right: 2px; }
.window-controls button { width: 43px; height: 20px; }
.window-controls svg { width: 12px; height: 12px; }

/* Document tabs */
.tabbar { display: flex; height: 29px; background: #c9c9c9; padding-top: 3px; }
.quick { width: 181px; display: flex; align-items: center; gap: 17px; padding: 0 6px 3px 8px; }
.with-caret { gap: 5px; }
.quick .with-caret + .with-caret { margin-left: -6px; }
.quick .caret { border-top-color: #5c5c5c; }
.faded { opacity: .6; }
.doc-tab { flex: 1; display: flex; align-items: center; background: #f1f1f1; border-radius: 4px 4px 0 0; padding-right: 6px; }
.doc-name { flex: 1; display: flex; align-items: center; justify-content: center; gap: 4px; font-size: 12px; }
.new-tab { width: 27px; margin: 0 3px; background: #bababa; border-radius: 3px 3px 0 0; }
.account { display: flex; align-items: center; gap: 15px; padding: 0 12px 3px 7px; }
.account svg { width: 16px; height: 16px; }
.account .avatar { width: 24px; height: 24px; margin-left: 3px; border-radius: 50%; background: #f1f1f1; font-size: 10px; color: #555; }

/* Ribbon */
.ribbon { display: flex; min-height: 77px; background: #f1f1f1; border-bottom: 1px solid #ddd; }
.workspace { width: 104px; height: 58px; margin: 10px 4px 0 10px; border: 1px solid #ddd; border-radius: 3px; gap: 5px; font-weight: 700; font-size: 10px; }
.ribbon-tabs { display: flex; gap: 18px; height: 22px; padding-left: 12px; }
.rtab { height: 22px; padding: 0 11px; }
.rtab.active { height: 23px; color: #1d87c9; border-bottom: 2px solid #1391d5; }
.groups { display: flex; }
.group { display: flex; flex-direction: column; align-items: center; padding: 0 8px 0 7px; position: relative; }
.group::after { content: ""; position: absolute; right: 0; top: 3px; bottom: 3px; width: 1px; background: #d5d5d5; }
.group.wide { padding: 0 11px; }
.group.last::after { display: none; }
.tools { display: flex; gap: 4px; height: 39px; }
.tool { width: 36px; height: 36px; }
.tool svg { width: 36px; height: 36px; }
.tool.on { background: #1391d5; }
.group-name { gap: 3px; }

/* Canvas */
.canvas { flex: 1; min-height: 400px; position: relative; overflow: hidden; background: #fefefe; border-bottom: 1px solid #c4c4c4; }
.scene { position: absolute; inset: 0; width: 100%; height: 100%; }
.dim { font: 15px "Liberation Sans", sans-serif; fill: #3b3a38; fill-opacity: .85; }
.bar { display: flex; align-items: center; background: #f1f1f1; border: 1px solid #ccc; color: #666; }
.bar h2 { flex: 1; }
.grip { width: 3px; height: 9px; border: 1px solid #777; border-width: 0 1px; }
.browser { position: absolute; left: 4px; top: 4px; width: 281px; }
.browser .bar { height: 23px; padding: 0 1px 0 4px; gap: 8px; border-top-color: #eee; }
.comments { position: absolute; left: 4px; bottom: 4px; width: 281px; height: 23px; padding: 0 1px 0 22px; gap: 8px; border-top-color: #eee; }
.tree { display: flex; flex-direction: column; justify-content: space-between; height: 109px; margin-top: 5px; }
.tree li { display: flex; align-items: center; gap: 8px; padding-left: 31px; }
.tree li.root { padding-left: 15px; gap: 7px; }
.item { display: flex; align-items: center; height: 18px; gap: 12px; padding: 0 10px 0 2px; background: #f1f1f1e6; position: relative; }
.item.sub { gap: 8px; }
.item.sub > span { margin-left: 4px; }
.root .item { gap: 5px; padding: 0 6px 0 2px; }
.root-name { display: flex; align-items: center; gap: 13px; height: 16px; padding: 0 8px 0 2px; background: #919191; color: #fff; }
.hidden-eye { opacity: .5; }
.hatch { position: absolute; left: 22px; right: 0; bottom: 0; height: 4px; background: repeating-linear-gradient(135deg, transparent 0 3px, #6e88aa 3px 5px); }
.viewcube { position: absolute; right: 26px; top: 15px; width: 50px; height: 76px; overflow: visible; }
.viewcube text { font: 700 6px "Liberation Sans", sans-serif; fill: #999; }
.viewcube .axis { font-size: 10px; }
.viewcube .z { fill: #8a9ae0; }
.viewcube .x { fill: #f3a0a0; }

/* Extrude dialog */
.extrude { position: absolute; right: 4px; top: 89px; width: 234px; background: #f1f1f1; border: 1px solid #ccc; }
.extrude .bar { height: 22px; gap: 4px; padding: 0 4px 0 1px; border-width: 0 0 1px; }
.extrude .bar .grip { margin-right: 2px; }
.fields { display: grid; grid-template-columns: 68px 123px; grid-auto-rows: 24px; row-gap: 4px; align-items: center; padding: 3px 0 7px 11px; }
.fields.op { padding: 5px 0 3px 11px; }
.types { display: flex; height: 24px; gap: 6px; }
.type { width: 21px; }
.type svg { width: 20px; height: 22px; }
.type.on, .selected { background: #1391d5; }
.selected { width: 73px; gap: 3px; color: #fff; }
.clear { padding: 0 3px; }
.fields > input { height: 24px; width: 100%; border: 1px solid #ccc; background: #fff; padding: 0 3px; }
.pick { position: relative; height: 24px; }
.pick select { width: 100%; height: 24px; appearance: none; border: 1px solid #ddd; border-radius: 0; background: #fff; padding: 0 16px 0 21px; }
.pick svg { position: absolute; left: 3px; top: 4px; width: 16px; height: 16px; }
.pick .caret { position: absolute; right: 4px; top: 10px; border-top-width: 4px; }
.extrude hr { height: 2px; margin: 0 11px 0 1px; border: 0; background: #c4c4c4; }
.actions { display: flex; align-items: center; gap: 9px; padding: 7px 10px 7px 7px; border-top: 1px solid #ddd; }
.actions svg { margin-right: auto; }
.actions button { width: 57px; height: 18px; border: 1px solid #b5b5b5; font-size: 12px; color: #777; }

/* Canvas overlays */
.hint { position: absolute; right: 234px; top: 393px; height: 15px; padding: 0 2px; border: 1px solid #777; background: #fff; color: #111; font: 10px/13px "DejaVu Sans Condensed", "Noto Sans", sans-serif; white-space: nowrap; }
.value-box { position: absolute; right: 20px; bottom: 59px; display: flex; height: 21px; background: #f0f0f0; }
.value-box input { width: 66px; border: 1px solid #ccc; background: #fff; text-align: center; }
.value-box button { width: 23px; }
.handle { width: 12px; background: repeating-linear-gradient(90deg, #ddd 0 1px, #f0f0f0 1px 4px); }
.navbar { position: absolute; left: 50%; bottom: 4px; transform: translateX(-50%); display: flex; gap: 8px; height: 23px; padding: 0 3px; background: #f0f0f0; }
.navbar button { gap: 3px; }
.navbar button:nth-child(n+6) { margin-left: -4px; }
.navbar svg { width: 16px; height: 16px; }
.status { position: absolute; right: 15px; bottom: 8px; font-weight: 700; }

/* Timeline */
.timeline { display: flex; align-items: center; height: 46px; padding: 0 12px 0 9px; border-bottom: 1px solid #ccc; }
.play { display: flex; gap: 9px; margin-right: 18px; }
.play svg { width: 14px; height: 14px; }
.prefs { margin-left: auto; }

/* Taskbar */
.taskbar { display: flex; height: 37px; color: #fff; font-family: "Open Sans", "Noto Sans", sans-serif; background: linear-gradient(90deg, #454545 0 46%, #493847 57%, #432c48 68%, #3f2c49 78%, #51404a 85%, #3c2d46 91%, #33384b 100%); }
.start { width: 45px; }
.search { display: flex; align-items: center; gap: 10px; width: 322px; padding-left: 12px; background: #f1f1f1; border-bottom: 1px solid #bbb; }
.search input { flex: 1; min-width: 0; border: 0; padding: 0; background: none; outline: 0; font-size: 13px; color: #333; }
.search input::placeholder { color: #333; opacity: 1; }
.apps { display: flex; }
.apps button { width: 46px; position: relative; }
.apps svg { width: 24px; height: 24px; }
.apps .open::after { content: ""; position: absolute; left: 4px; right: 4px; bottom: 0; height: 2px; background: #76b0e6; }
.apps .current { background: #6c5568; }
.apps .current::after { left: 0; right: 0; }
.tray { display: flex; align-items: center; margin-left: auto; padding-right: 23px; gap: 8px; font-size: 10px; }
.lang { margin-left: 3px; }
.clock { display: flex; flex-direction: column; align-items: center; margin: 0 8px 0 5px; line-height: 17px; }
```
